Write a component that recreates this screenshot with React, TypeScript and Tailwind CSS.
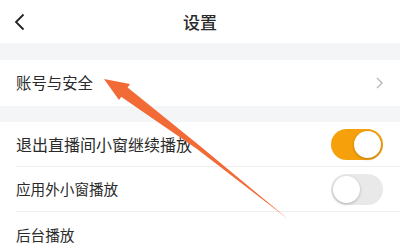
import { useState } from "react";

const font = { fontFamily: '"Noto Sans CJK SC", "Noto Sans", sans-serif' };

function Toggle({ on }: { on: boolean }) {
  return (
    <div
      className={
        "w-[52px] h-[31px] rounded-full p-[2px] flex items-center " +
        (on ? "bg-[#f6a10c] justify-end" : "bg-[#e9e9ea] justify-start")
      }
    >
      <div className="w-[27px] h-[27px] rounded-full bg-white shadow-[0_1px_3px_rgba(0,0,0,0.25)]" />
    </div>
  );
}

const App = () => {
  const [rows] = useState([
    { label: "退出直播间小窗继续播放", on: true, size: "text-[16px]" },
    { label: "应用外小窗播放", on: false, size: "text-[14.6px]" },
    { label: "后台播放", on: null, size: "text-[14.6px]" },
  ]);

  return (
    <div className="relative w-[400px] h-[248px] overflow-hidden bg-white text-[#2a2a2a]" style={font}>
      <div className="h-[43px] flex items-center relative">
        <svg className="absolute left-[14px] top-[13px]" width="12" height="18" viewBox="0 0 12 18">
          <path d="M9.5 1.5 L2 9 L9.5 16.5" fill="none" stroke="#222" strokeWidth="1.8" />
        </svg>
        <div className="flex-1 text-center text-[17px] font-medium">设置</div>
      </div>
      <div className="h-[17px] bg-[#f4f5f6]" />
      <div className="h-[46px] flex items-center justify-between pl-4 pr-[17px]">
        <span className="text-[15.4px]">账号与安全</span>
        <svg width="7" height="12" viewBox="0 0 7 12">
          <path d="M1 1 L6 6 L1 11" fill="none" stroke="#b8b8b8" strokeWidth="1.4" />
        </svg>
      </div>
      <div className="h-[16px] bg-[#f4f5f6]" />
      <div className="flex flex-col">
        {rows.map((r, i) => (
          <div key={i} className="pl-4">
            <div
              className={
                "flex items-center justify-between pr-[17px] h-[45px] " +
                (i < rows.length - 1 ? "border-b border-[#efefef]" : "")
              }
            >
              <span className={r.size}>{r.label}</span>
              {r.on !== null && <Toggle on={r.on} />}
            </div>
          </div>
        ))}
      </div>
      <svg className="absolute left-0 top-0 pointer-events-none" width="400" height="248" viewBox="0 0 400 248">
        <polygon points="104,79 130,84 119,100" fill="#f26a36" />
        <polygon points="120,96 127,87 200,146 288,219 197,149" fill="#f26a36" />
      </svg>
    </div>
  );
};

export default App;
